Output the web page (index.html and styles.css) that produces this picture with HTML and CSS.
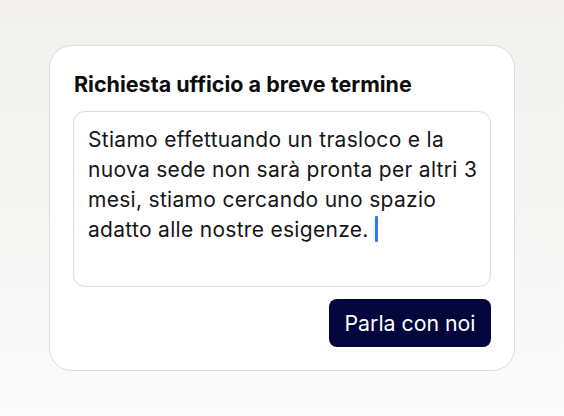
FILE: index.html
```html
<!DOCTYPE html>
<html lang="it">
<head>
<meta charset="utf-8">
<title>Richiesta ufficio a breve termine</title>
<link rel="stylesheet" href="styles.css">
</head>
<body>
<main class="stage">
  <section class="card">
    <h1 class="title">Richiesta ufficio a breve termine</h1>
    <div class="field">
      <p class="field-text">Stiamo effettuando un trasloco e la<br>nuova sede non sarà pronta per altri 3<br>mesi, stiamo cercando uno spazio<br>adatto alle nostre esigenze. <span class="caret"></span></p>
    </div>
    <div class="actions">
      <button class="btn" type="button">Parla con noi</button>
    </div>
  </section>
</main>
</body>
</html>
```

FILE: styles.css
```css
* { box-sizing: border-box; }
html, body { margin: 0; padding: 0; }
body {
  width: 564px;
  height: 416px;
  overflow: hidden;
  background: linear-gradient(180deg, #f2f1ef 0%, #f6f6f5 60%, #fbfbfb 100%);
  font-family: Inter, "Noto Sans", sans-serif;
  color: #111111;
}
.stage {
  padding: 45px 0 0 49px;
}
.card {
  width: 466px;
  height: 326px;
  background: #ffffff;
  border: 1px solid #dddcdb;
  border-radius: 23px;
  padding: 24px 23px 23px 23px;
  display: flex;
  flex-direction: column;
}
.title {
  margin: 0 0 0 1px;
  font-size: 21.5px;
  line-height: 28px;
  font-weight: 700;
  letter-spacing: 0;
  color: #0d0d0d;
}
.field {
  margin-top: 13px;
  height: 176px;
  border: 1px solid #dcdcdc;
  border-radius: 12px;
  padding: 13px 14px 12px;
}
.field-text {
  margin: 0;
  font-size: 21px;
  line-height: 30px;
  letter-spacing: 0.3px;
  color: #161616;
  white-space: nowrap;
}
.caret {
  display: inline-block;
  width: 3px;
  height: 26px;
  background: #2a7bf6;
  border-radius: 1px;
  vertical-align: -5px;
}
.actions {
  margin-top: 12px;
  display: flex;
  justify-content: flex-end;
}
.btn {
  width: 162px;
  height: 48px;
  border: 0;
  border-radius: 8px;
  background: #02063d;
  color: #ffffff;
  font-family: Inter, "Noto Sans", sans-serif;
  font-size: 21.3px;
  letter-spacing: 0;
  padding: 0;
}
```
